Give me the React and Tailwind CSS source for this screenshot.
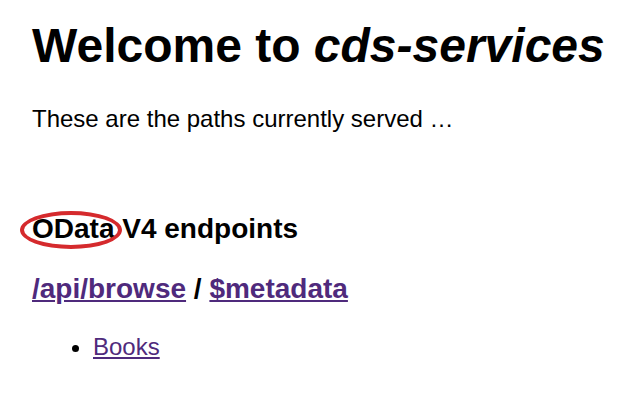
import React from 'react';

export default function App() {
  return (
    <div className="min-h-screen bg-white text-black pl-[32px] pt-[22px] font-['Liberation_Sans',Arial,sans-serif]">
      <h1 className="text-[48px] leading-[48px] font-bold">
        Welcome to <i>cds-services</i>
      </h1>
      <p className="mt-[37px] text-[24px] leading-[24px]">These are the paths currently served …</p>

      {/* endpoints section */}
      <h3 className="relative mt-[84px] text-[28px] leading-[28px] font-bold">
        <span className="absolute left-[-12px] top-[-4px] w-[102px] h-[38px] rounded-[50%] border-[4px] border-[#d52a2d]"></span>
        OData V4 endpoints
      </h3>
      <h3 className="mt-[32px] text-[28px] leading-[28px] font-bold">
        <a href="#" className="text-[#4f2a7c] underline">/api/browse</a>
        {' / '}
        <a href="#" className="text-[#4f2a7c] underline">$metadata</a>
      </h3>
      <ul className="mt-[32px] pl-[61px] list-disc text-[24px] leading-[24px]">
        <li>
          <a href="#" className="text-[#4f2a7c] underline">Books</a>
        </li>
      </ul>
    </div>
  );
}
